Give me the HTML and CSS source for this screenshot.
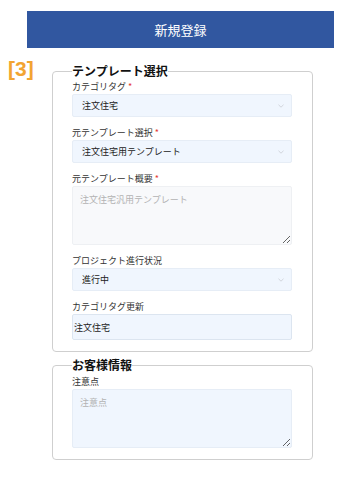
FILE: index.html
```html
<!DOCTYPE html>
<html lang="ja">
<head>
    <meta charset="UTF-8">
    <meta name="viewport" content="width=device-width, initial-scale=1.0">
    <title>新規登録</title>
    <link rel="stylesheet" href="styles.css">
</head>
<body>
    <div class="page">
        <header class="title-bar">新規登録</header>
        <span class="step">[3]</span>

        <form class="form">
            <fieldset class="group">
                <legend>テンプレート選択</legend>

                <div class="field first">
                    <label>カテゴリタグ <span class="req">*</span></label>
                    <div class="select-wrap">
                        <select class="control select">
                            <option>注文住宅</option>
                        </select>
                        <svg class="chevron" width="6" height="4" viewBox="0 0 6 4"><path d="M0.5 0.8 L3 3.2 L5.5 0.8" fill="none" stroke="#c8ccd2" stroke-width="0.8"/></svg>
                    </div>
                </div>

                <div class="field">
                    <label>元テンプレート選択 <span class="req">*</span></label>
                    <div class="select-wrap">
                        <select class="control select">
                            <option>注文住宅用テンプレート</option>
                        </select>
                        <svg class="chevron" width="6" height="4" viewBox="0 0 6 4"><path d="M0.5 0.8 L3 3.2 L5.5 0.8" fill="none" stroke="#c8ccd2" stroke-width="0.8"/></svg>
                    </div>
                </div>

                <div class="field">
                    <label>元テンプレート概要 <span class="req">*</span></label>
                    <textarea class="control textarea readonly" placeholder="注文住宅汎用テンプレート" readonly></textarea>
                </div>

                <div class="field">
                    <label>プロジェクト進行状況</label>
                    <div class="select-wrap">
                        <select class="control select">
                            <option>進行中</option>
                        </select>
                        <svg class="chevron" width="6" height="4" viewBox="0 0 6 4"><path d="M0.5 0.8 L3 3.2 L5.5 0.8" fill="none" stroke="#c8ccd2" stroke-width="0.8"/></svg>
                    </div>
                </div>

                <div class="field">
                    <label>カテゴリタグ更新</label>
                    <input type="text" class="control text" value="注文住宅">
                </div>
            </fieldset>

            <fieldset class="group">
                <legend>お客様情報</legend>

                <div class="field first">
                    <label>注意点</label>
                    <textarea class="control textarea" placeholder="注意点"></textarea>
                </div>
            </fieldset>
        </form>
    </div>
</body>
</html>
```

FILE: styles.css
```css
body {
    margin: 0;
    font-family: "Noto Sans CJK JP", "Noto Sans", sans-serif;
    color: #222;
    background: #fff;
}
.page {
    position: relative;
    padding-top: 11px;
}
.title-bar {
    margin-left: 27px;
    width: 307px;
    height: 37px;
    line-height: 37px;
    background-color: #3157a0;
    color: #fff;
    font-size: 13px;
    text-align: center;
}
.step {
    position: absolute;
    left: 8px;
    top: 57px;
    font-family: "Liberation Sans", Arial, sans-serif;
    font-size: 21px;
    font-weight: 700;
    color: #f2a431;
    line-height: 24px;
}
.form {
    margin-left: 52px;
    width: 261px;
}
.group {
    box-sizing: border-box;
    width: 261px;
    margin: 15px 0 0;
    padding: 0 20px 11px 19px;
    border: 1px solid #cfcfcf;
    border-radius: 4px;
}
.group + .group {
    margin-top: 5px;
}
.group legend {
    padding: 0;
    font-size: 12px;
    font-weight: 700;
    line-height: 16px;
    color: #111;
}
.field {
    margin-top: 9px;
}
.field.first {
    margin-top: 1px;
}
.group + .group .field.first {
    margin-top: 2px;
}
.field label {
    display: block;
    font-size: 9px;
    line-height: 13px;
    color: #333;
    margin-bottom: 1px;
}
.req {
    color: #e53935;
}
.select-wrap {
    position: relative;
}
.control {
    display: block;
    box-sizing: border-box;
    width: 100%;
    margin: 0;
    font-family: inherit;
    font-size: 9px;
    color: #222;
    border: 1px solid #e6edf6;
    border-radius: 2px;
    background-color: #f0f6fe;
    outline: none;
}
.select {
    appearance: none;
    -webkit-appearance: none;
    height: 23px;
    padding: 0 9px;
}
.chevron {
    position: absolute;
    right: 8px;
    top: 10px;
}
.textarea {
    height: 59px;
    padding: 6px 7px;
    line-height: 13px;
    resize: vertical;
}
.textarea::placeholder {
    color: #b3b3b3;
}
.textarea.readonly {
    background-color: #f8f9fb;
    border-color: #eef0f3;
}
.text {
    height: 26px;
    padding: 0 1px;
    border-color: #dce5f0;
}
```
